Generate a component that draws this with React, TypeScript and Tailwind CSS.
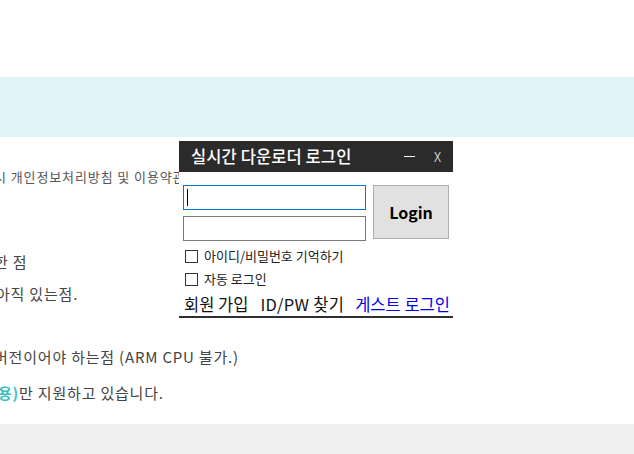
import React from "react";

const font = { fontFamily: '"Noto Sans CJK KR", "Noto Sans", sans-serif' };

function LoginWindow() {
  return (
    <div className="absolute left-[179px] top-[141px] w-[274px] h-[177px] bg-white flex flex-col border-b-2 border-[#2f2f2f]">
      <div className="h-[31px] bg-[#2b2b2b] flex items-center pl-[12px] pr-[12px] text-white">
        <span className="text-[16.5px] font-medium tracking-[0.1px]">실시간 다운로더 로그인</span>
        <span className="ml-auto w-[11px] h-px bg-white mr-[19px]" />
        <span className="text-[13px] font-light leading-none">X</span>
      </div>
      <div className="flex pl-[4px] pt-[13px] gap-[7px]">
        <div className="flex flex-col gap-[6px]">
          <div className="w-[183px] h-[25px] border border-[#0078d7] flex items-center pl-[3px]">
            <span className="w-px h-[17px] bg-black" />
          </div>
          <div className="w-[183px] h-[25px] border border-[#7a7a7a]" />
        </div>
        <button className="w-[76px] h-[54px] bg-[#e1e1e1] border border-[#adadad] text-[16px] font-bold text-black">
          Login
        </button>
      </div>
      <div className="flex flex-col pl-[6px] pt-[8px] gap-[9px] text-[13px] text-[#222]">
        <label className="flex items-center gap-[6px] h-[14px]">
          <span className="w-[13px] h-[13px] border border-[#333] bg-white" />
          <span>아이디/비밀번호 기억하기</span>
        </label>
        <label className="flex items-center gap-[6px] h-[14px]">
          <span className="w-[13px] h-[13px] border border-[#333] bg-white" />
          <span>자동 로그인</span>
        </label>
      </div>
      <div className="flex items-center pl-[5px] mt-[8px] text-[16.5px] leading-[20px] text-[#111]">
        <span>회원 가입</span>
        <span className="ml-[12px] tracking-[0.3px]">ID/PW 찾기</span>
        <span className="ml-[11px] text-[#0000ee]">게스트 로그인</span>
      </div>
    </div>
  );
}

export default function App() {
  return (
    <div className="relative w-[634px] h-[454px] overflow-hidden bg-white flex flex-col" style={font}>
      <div className="h-[77px]" />
      <div className="h-[60px] bg-[#dff5f9]" />
      <div className="flex-1 flex flex-col text-[#444]">
        <p className="mt-[31px] text-[13px] leading-[18px] tracking-[0.9px] text-[#555] ml-[-6px] whitespace-nowrap">
          시 개인정보처리방침 및 이용약관에 동의하게 됩니다.
        </p>
        <p className="mt-[66px] text-[15px] leading-[20px] tracking-[0.8px] ml-[-6px] whitespace-nowrap">한 점</p>
        <p className="mt-[12px] text-[15px] leading-[20px] tracking-[0.8px] ml-[-4px] whitespace-nowrap">아직 있는점.</p>
        <p className="mt-[43px] text-[15px] leading-[20px] tracking-[0.8px] ml-[-6px] whitespace-nowrap">
          버전이어야 하는점 (ARM CPU 불가.)
        </p>
        <p className="mt-[16px] text-[15px] leading-[20px] tracking-[0.8px] ml-[-2px] whitespace-nowrap">
          <span className="font-bold text-[#3bbfc4]">용)</span>만 지원하고 있습니다.
        </p>
      </div>
      <div className="h-[30px] bg-[#f0f0f0]" />
      <LoginWindow />
    </div>
  );
}
